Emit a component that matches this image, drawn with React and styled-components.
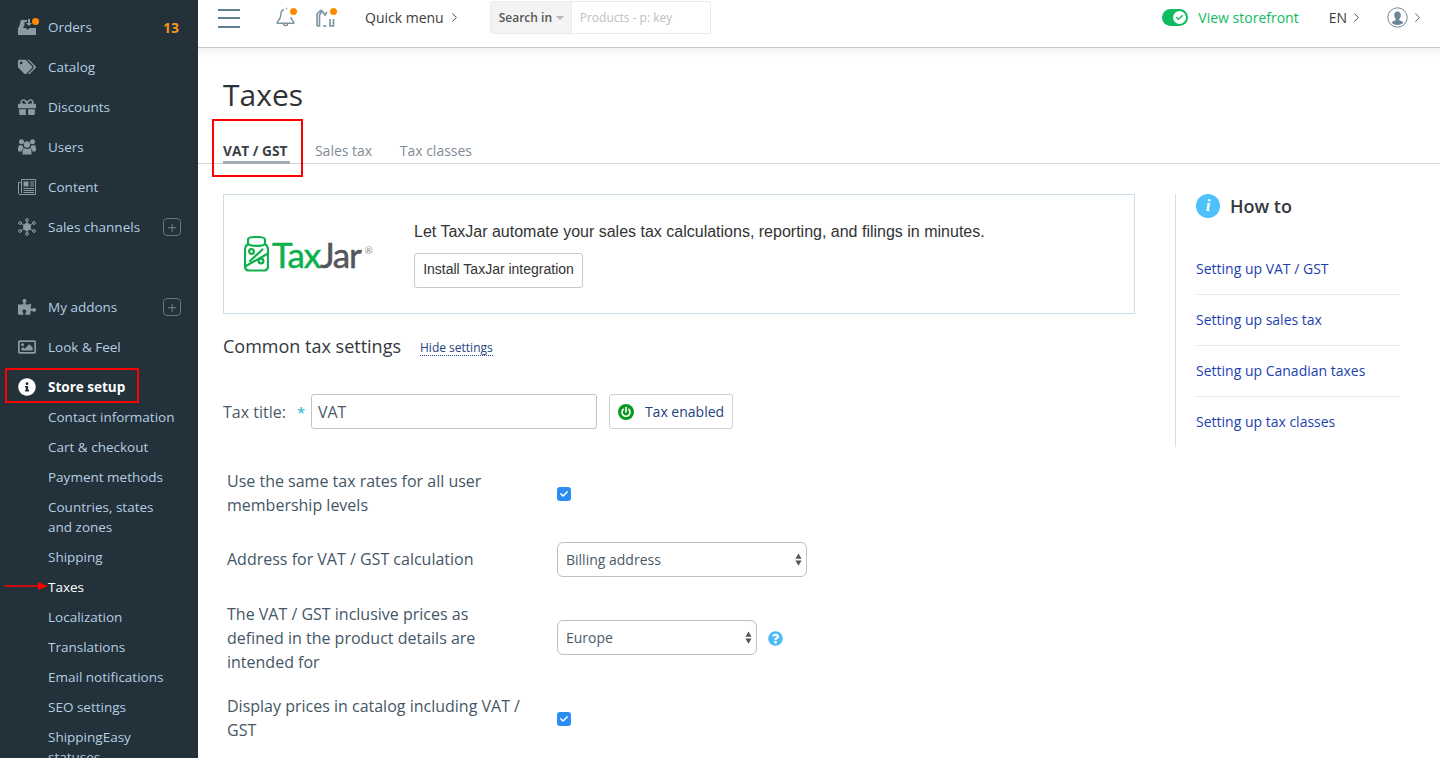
import React from "react";
import styled, { createGlobalStyle } from "styled-components";
import { FaTags, FaGift, FaPuzzlePiece, FaRegImage, FaInfoCircle, FaQuestionCircle, FaCheck } from "react-icons/fa";
import { FiChevronRight } from "react-icons/fi";

const Global = createGlobalStyle`
  html, body { margin: 0; padding: 0; height: 100%; overflow: hidden; background: #fff; }
  body { font-family: "Open Sans", "Liberation Sans", sans-serif; }
  * { box-sizing: border-box; }
`;

const Page = styled.div`position: relative; display: flex; width: 1440px; height: 758px; overflow: hidden;`;

const Sidebar = styled.nav`
  width: 198px; flex: none; height: 758px; overflow: hidden; background: #22313a;
  padding-top: 7px; color: #b7cde0; font-size: 13.5px;
`;
const NavItem = styled.div`
  display: flex; align-items: center; height: 40px; padding: 0 18px;
  color: ${p => (p.$active ? "#fff" : "#b7cde0")}; font-weight: ${p => (p.$active ? 700 : 400)};
`;
const NavSpacer = styled.div`height: 40px;`;
const NavIcon = styled.span`
  position: relative; display: flex; align-items: center; justify-content: center; width: 18px; height: 18px; margin-right: 12px;
  color: ${p => (p.$active ? "#fff" : "#8b9aa3")}; font-size: 18px;
`;
const NavDot = styled.span`position: absolute; top: 0; right: -3px; width: 7px; height: 7px; border-radius: 50%; background: #ff8a00;`;
const NavLabel = styled.span`flex: 1; line-height: 20px;`;
const Count = styled.span`color: #f7931e; font-weight: 700; font-size: 14px; padding-right: 1px;`;
const PlusBox = styled.span`
  display: flex; width: 18px; height: 18px; border: 1px solid #66757f; border-radius: 4px; align-items: center; justify-content: center;
  color: #66757f; font-size: 17px; font-weight: 400; line-height: 1; margin-right: -1px;
`;
const SubList = styled.div`margin-top: -5px;`;
const SubItem = styled.div`
  padding: 5px 18px 5px 48px; line-height: 20px; color: ${p => (p.$active ? "#fff" : "#b7cde0")};
`;

const Main = styled.div`flex: 1; min-width: 0; display: flex; flex-direction: column;`;
const TopBar = styled.header`
  display: flex; align-items: center; height: 48px; padding: 0 15px 13px 20px; border-bottom: 1px solid #c8c8c8; color: #333;
  font-size: 14px; flex: none;
`;
const Burger = styled.div`
  width: 22px; height: 19px; margin-top: 2px; display: flex; flex-direction: column; justify-content: space-between;
  & > i { display: block; height: 2px; background: #5f7f8e; }
`;
const BellWrap = styled.span`position: relative; display: flex; margin-left: ${p => p.$left}px; width: 22px; height: 22px;`;
const IconDot = styled.span`position: absolute; top: 2px; right: 0; width: 7px; height: 7px; border-radius: 50%; background: #ff8a00;`;
const QuickMenu = styled.span`display: flex; align-items: center; margin-left: 28px; gap: 3px; color: #3b3b3b;`;
const SearchBox = styled.div`
  display: flex; height: 33px; width: 221px; margin-left: 28px; margin-top: 1px; border: 1px solid #eaeaea; border-radius: 3px; font-size: 12px; overflow: hidden;
`;
const SearchIn = styled.div`
  width: 81px; background: #f3f3f3; border-right: 1px solid #eaeaea; display: flex; align-items: center; padding-left: 8px; font-weight: 600; color: #555; gap: 4px;
  &::after { content: ""; border-left: 4px solid transparent; border-right: 4px solid transparent; border-top: 4px solid #b5b5b5; }
`;
const SearchPlaceholder = styled.div`flex: 1; display: flex; align-items: center; padding-left: 8px; color: #c0c0c0;`;
const TopRight = styled.div`display: flex; align-items: center; margin-left: auto;`;
const Toggle = styled.span`
  display: flex; align-items: center; justify-content: flex-end; width: 26px; height: 17px; border-radius: 9px; background: #0dbb62; padding-right: 1px;
`;
const ToggleKnob = styled.span`
  width: 13px; height: 13px; border-radius: 50%; background: #fff; color: #0dbb62; display: flex; align-items: center; justify-content: center; font-size: 7px; margin-right: 1px;
`;
const Storefront = styled.span`color: #0dbb62; margin-left: 10px;`;
const Lang = styled.span`display: flex; align-items: center; margin-left: 30px; gap: 2px; color: #3b3b3b;`;
const Avatar = styled.span`display: flex; margin-left: 23px; align-items: center; gap: 2px; color: #555;`;

const Body = styled.div`
  flex: 1; min-height: 0; overflow: hidden;
  background: linear-gradient(#f4f4f4, #fff 10px) no-repeat; background-size: 100% 12px;
`;
const Title = styled.h1`margin: 0; padding: 26px 0 0 25px; font-weight: 400; font-size: 30px; line-height: 41px; color: #2f3338;`;
const Tabs = styled.div`
  display: flex; gap: 26px; padding: 19px 0 0 25px; height: 49px; border-bottom: 1px solid #d6d6d6; font-size: 14px;
`;
const Tab = styled.div`
  height: ${p => (p.$active ? "30px" : "29px")}; padding: 8px ${p => (p.$active ? "3px" : "1.5px")} 0 0; line-height: 18px;
  margin-right: ${p => (p.$active ? "-1.5px" : "0")};
  color: ${p => (p.$active ? "#3a4148" : "#7f8c96")};
  font-weight: ${p => (p.$active ? 700 : 400)};
  font-size: ${p => (p.$active ? "13.7px" : "14px")};
  border-bottom: ${p => (p.$active ? "3px solid #a3acb1" : "0")};
`;
const Columns = styled.div`display: flex; padding: 30px 0 0 25px;`;
const Content = styled.div`width: 912px; flex: none;`;
const Promo = styled.div`
  display: flex; align-items: center; height: 120px; border: 1px solid #cfdfe9; padding-left: 20px;
`;
const Logo = styled.div`display: flex; align-items: center; width: 170px; height: 36px;`;
const LogoText = styled.span`
  font-family: "Lato", sans-serif; font-size: 35px; line-height: 36px; letter-spacing: -1.2px; color: #0eb04b; margin-left: 3px; font-weight: 400;
  -webkit-text-stroke: 0.5px currentColor;
  & > b { color: #54565b; font-weight: 400; }
  & > sup { color: #8b8b8b; font-size: 10px; vertical-align: 14px; letter-spacing: 0; line-height: 0; margin-left: 4px; -webkit-text-stroke: 0; }
`;
const PromoText = styled.div`
  font-family: "Liberation Sans", Arial, sans-serif; font-size: 16px; color: #333;
`;
const PromoLine = styled.div`line-height: 22px; margin-bottom: 10px;`;
const PromoButton = styled.button`
  display: block; font: 14px "Liberation Sans", Arial, sans-serif; color: #333; background: #fff; width: 169px; height: 35px; border: 1px solid #c9c9c9; border-radius: 3px; padding: 0 0 2px;
`;
const SettingsHead = styled.div`display: flex; align-items: center; margin-top: 21px; height: 24px;`;
const SettingsTitle = styled.h2`margin: 0; font-size: 18px; font-weight: 400; color: #33383d; line-height: 24px; position: relative; top: -1px;`;
const HideLink = styled.a`margin-left: 19px; font-size: 12px; color: #24427f; border-bottom: 1px dotted #24427f; line-height: 14px; margin-top: 3px;`;
const TaxRow = styled.div`display: flex; align-items: center; margin-top: 35px; height: 35px;`;
const TaxLabel = styled.label`font-size: 16px; color: #4b5a68;`;
const Star = styled.span`color: #21b5d6; font-size: 15px; margin-left: 11px; width: 14px; display: block;`;
const TextField = styled.div`
  width: 286px; height: 35px; margin-left: 0; border: 1px solid #c3c3c3; border-radius: 3px; display: flex; align-items: center; padding-left: 6px;
  font-size: 16px; color: #4b5a68;
`;
const EnabledBtn = styled.div`
  display: flex; align-items: center; margin-left: 12px; width: 124px; height: 35px; border: 1px solid #d0d0d0; border-radius: 3px; padding-left: 8px; gap: 11px;
  color: #24427f; font-size: 14px;
`;
const Form = styled.div`margin-top: 0; padding-left: 4px;`;
const FormRow = styled.div`
  display: flex; align-items: center; margin-top: ${p => p.$gap}px; min-height: ${p => p.$h}px;
`;
const FormLabel = styled.div`width: 330px; flex: none; font-size: 16px; line-height: 24px; color: #455666; padding-right: 30px;`;
const Checkbox = styled.span`
  width: 14px; height: 14px; border-radius: 3px; background: #2b8cf3; color: #fff; display: flex; align-items: center; justify-content: center; font-size: 8px; margin-top: 2px;
`;
const Select = styled.div`
  width: ${p => p.$w}px; height: 35px; border: 1px solid #bfbfbf; border-radius: 6px; display: flex; align-items: center; justify-content: space-between;
  padding: 0 4px 0 8px; font-size: 14px; color: #4b5a68; background: #fff; margin-bottom: ${p => p.$lift || 0}px;
`;
const Help = styled.span`display: flex; margin-left: 11px; color: #4bbcf5; font-size: 15px;`;
const Aside = styled.aside`
  margin-left: 40px; width: 224px; flex: none; height: 253px; border-left: 1px solid #dcdcdc; padding-left: 20px;
`;
const HowTo = styled.div`display: flex; align-items: center; gap: 10px; height: 24px; font-size: 18px; font-weight: 600; color: #33383d;`;
const InfoBadge = styled.span`
  width: 24px; height: 24px; border-radius: 50%; background: #4cc1fb; color: #fff; display: flex; align-items: center; justify-content: center;
  font: italic 700 17px "Liberation Serif", serif;
`;
const LinkList = styled.div`margin-top: 26px;`;
const HelpLink = styled.div`
  height: 51px; padding-top: 15px; line-height: 20px; font-size: 14px; color: #1d3fae; border-bottom: 1px dotted #d0d0d0;
  &:last-child { border-bottom: 0; }
`;
const RedBox = styled.div`
  position: absolute; left: ${p => p.$x}px; top: ${p => p.$y}px; width: ${p => p.$w}px; height: ${p => p.$h}px; border: 2px solid #f00; pointer-events: none;
`;
const RedArrow = styled.svg`position: absolute; left: 3px; top: 580px;`;

const Hub = () => (
  <svg width="18" height="18" viewBox="0 0 18 18" fill="none" stroke="#8b9aa3" strokeWidth="1">
    <circle cx="9" cy="9" r="3.5" fill="#8b9aa3" />
    <path d="M9 2v4M9 12v4M2.5 5l4 2.5M11.5 10.5l4 2.5M2.5 13l4-2.5M11.5 7.5l4-2.5" />
    <circle cx="9" cy="2" r="1.4" /><circle cx="9" cy="16" r="1.4" /><circle cx="2" cy="5" r="1.4" /><circle cx="16" cy="5" r="1.4" /><circle cx="2" cy="13" r="1.4" /><circle cx="16" cy="13" r="1.4" />
  </svg>
);
const Inbox = () => (
  <svg width="18" height="18" viewBox="0 0 18 18" fill="#8b9aa3">
    <path d="M3 2h6v2H6.5v3L5 10h3.2a1.5 1.5 0 0 0 3 0H18v7H0v-7l1-1z" />
    <path d="M10 1h2v4h2l-3 3-3-3h2z" />
  </svg>
);
const UsersIcon = () => (
  <svg width="18" height="18" viewBox="0 0 18 18" fill="#8b9aa3">
    <circle cx="9" cy="6.500" r="3.200" />
    <path d="M4.500 16.500v-3c0-2.200 1.600-3.300 2.400-3.300.5.500 1.300.8 2.100.8s1.600-.3 2.100-.8c.8 0 2.400 1.100 2.400 3.300v3z" />
    <circle cx="3.500" cy="3.700" r="2.500" /><circle cx="14.500" cy="3.700" r="2.500" />
    <path d="M0 11.500C0 8.500.8 7 2 7c.6.400 1.200.5 2 .5.300 0 .7 0 1-.1-.2 1.200.2 2.300 1 3C4.500 11 3.500 12.200 3.500 13.500H1c-.6 0-1-.5-1-2zM18 11.500C18 8.500 17.200 7 16 7c-.6.400-1.200.5-2 .5-.3 0-.7 0-1-.1.200 1.200-.2 2.300-1 3 1.500.6 2.500 1.800 2.500 3.100H17c.6 0 1-.5 1-2z" />
  </svg>
);
const NewsIcon = () => (
  <svg width="18" height="18" viewBox="0 0 18 18" fill="none" stroke="#8b9aa3" strokeWidth="1">
    <path d="M3.500 1.500h14v15H2c-.8 0-1.500-.7-1.500-1.500V4.500h3zM3.500 4.500V15" />
    <rect x="5.500" y="3.500" width="5" height="5" fill="#8b9aa3" stroke="none" />
    <path d="M12 4h4M12 6h4M12 8h4M5.500 10.500h10.500M5.500 12.500h10.500M5.500 14.500h10.500" />
  </svg>
);
const Bell = () => (
  <svg width="22" height="22" viewBox="0 0 22 22" fill="none" stroke="#7a93a0" strokeWidth="1.400">
    <path d="M9 3.500C6.800 4 5.800 6 5.800 9c0 3-1.500 5-3.500 7v1.300h16.500V16c-1.500-1.500-2.500-3-3-5M11 2.500h1.200M8.500 18c.4 2.200 3.800 2.200 4.200 0" />
  </svg>
);
const Store = () => (
  <svg width="22" height="22" viewBox="0 0 22 22" fill="none" stroke="#7a93a0" strokeWidth="1.600">
    <path d="M2 20V8l4-4M2 20h2.500V9M4.500 9L7 5l3 4 2-3M8 20h3.500M15 13v7h3.500v-7" />
  </svg>
);
const User = () => (
  <svg width="21" height="21" viewBox="0 0 21 21">
    <circle cx="10.5" cy="10.5" r="9.7" fill="#fff" stroke="#6b8796" strokeWidth="1" />
    <path d="M10.5 4.5c2.2 0 3.3 1.600 3.300 3.700 0 1.500-.7 3-1.600 3.700v1.300c1.800.7 3.500 1.300 4.300 2.600a9 9 0 0 1-12 0c.8-1.300 2.500-1.900 4.300-2.600v-1.300c-.9-.7-1.600-2.200-1.600-3.700 0-2.100 1.100-3.700 3.300-3.700z" fill="#6b8796" />
  </svg>
);
const Power = () => (
  <svg width="16" height="16" viewBox="0 0 16 16">
    <circle cx="8" cy="8" r="8" fill="#0a9a22" />
    <path d="M5.2 5.4a4 4 0 1 0 5.600 0M8 3.500V8" fill="none" stroke="#fff" strokeWidth="1.600" strokeLinecap="round" />
  </svg>
);
const Jar = () => (
  <svg width="25" height="36" viewBox="0 0 25 36" fill="none" stroke="#0eb04b" strokeWidth="2.200" strokeLinecap="round">
    <path d="M4 3.500C4 1.800 8 1 12.500 1S21 1.800 21 3.500v4c0 1.500-4 2.300-8.500 2.300S4 9 4 7.500z" />
    <path d="M4 8C2 9.500 1 11 1 13v17c0 2.500 1.500 4.500 4 4.500h15c2.500 0 4-2 4-4.500V13c0-2-1-3.500-3-5" />
    <path d="M1 30.500l23-13M6 25L18.500 13.500" />
    <circle cx="7.500" cy="15.500" r="2.400" />
    <circle cx="17" cy="25" r="2.400" />
  </svg>
);
const UpDown = () => (
  <svg width="7" height="13" viewBox="0 0 8 14" fill="#555"><path d="M4 0l3.500 6H.5zM4 14L.5 8h7z" /></svg>
);
const Chevron = styled(FiChevronRight)`font-size: 15px; stroke-width: 1.5;`;

const subItems = ["Contact information", "Cart & checkout", "Payment methods", "Countries, states and zones", "Shipping", "Taxes", "Localization", "Translations", "Email notifications", "SEO settings", "ShippingEasy statuses"];
const links = ["Setting up VAT / GST", "Setting up sales tax", "Setting up Canadian taxes", "Setting up tax classes"];

export default function App() {
  return (
    <Page>
      <Global />
      <Sidebar>
        <NavItem><NavIcon><Inbox /><NavDot /></NavIcon><NavLabel>Orders</NavLabel><Count>13</Count></NavItem>
        <NavItem><NavIcon><FaTags /></NavIcon><NavLabel>Catalog</NavLabel></NavItem>
        <NavItem><NavIcon><FaGift /></NavIcon><NavLabel>Discounts</NavLabel></NavItem>
        <NavItem><NavIcon><UsersIcon /></NavIcon><NavLabel>Users</NavLabel></NavItem>
        <NavItem><NavIcon><NewsIcon /></NavIcon><NavLabel>Content</NavLabel></NavItem>
        <NavItem><NavIcon><Hub /></NavIcon><NavLabel>Sales channels</NavLabel><PlusBox>+</PlusBox></NavItem>
        <NavSpacer />
        <NavItem><NavIcon><FaPuzzlePiece /></NavIcon><NavLabel>My addons</NavLabel><PlusBox>+</PlusBox></NavItem>
        <NavItem><NavIcon><FaRegImage /></NavIcon><NavLabel>Look &amp; Feel</NavLabel></NavItem>
        <NavItem $active><NavIcon $active><FaInfoCircle /></NavIcon><NavLabel>Store setup</NavLabel></NavItem>
        <SubList>
          {subItems.map(s => <SubItem key={s} $active={s === "Taxes"}>{s}</SubItem>)}
        </SubList>
      </Sidebar>
      <Main>
        <TopBar>
          <Burger><i /><i /><i /></Burger>
          <BellWrap $left={35}><Bell /><IconDot /></BellWrap>
          <BellWrap $left={18}><Store /><IconDot /></BellWrap>
          <QuickMenu>Quick menu <Chevron /></QuickMenu>
          <SearchBox>
            <SearchIn>Search in</SearchIn>
            <SearchPlaceholder>Products - p: key</SearchPlaceholder>
          </SearchBox>
          <TopRight>
            <Toggle><ToggleKnob><FaCheck /></ToggleKnob></Toggle>
            <Storefront>View storefront</Storefront>
            <Lang>EN <Chevron /></Lang>
            <Avatar><User /><Chevron /></Avatar>
          </TopRight>
        </TopBar>
        <Body>
          <Title>Taxes</Title>
          <Tabs>
            <Tab $active>VAT / GST</Tab>
            <Tab>Sales tax</Tab>
            <Tab>Tax classes</Tab>
          </Tabs>
          <Columns>
            <Content>
              <Promo>
                <Logo><Jar /><LogoText>Tax<b>Jar</b><sup>®</sup></LogoText></Logo>
                <PromoText>
                  <PromoLine>Let TaxJar automate your sales tax calculations, reporting, and filings in minutes.</PromoLine>
                  <PromoButton>Install TaxJar integration</PromoButton>
                </PromoText>
              </Promo>
              <SettingsHead>
                <SettingsTitle>Common tax settings</SettingsTitle>
                <HideLink>Hide settings</HideLink>
              </SettingsHead>
              <TaxRow>
                <TaxLabel>Tax title:</TaxLabel>
                <Star>*</Star>
                <TextField>VAT</TextField>
                <EnabledBtn><Power />Tax enabled</EnabledBtn>
              </TaxRow>
              <Form>
                <FormRow $gap={40} $h={48}>
                  <FormLabel>Use the same tax rates for all user membership levels</FormLabel>
                  <Checkbox><FaCheck /></Checkbox>
                </FormRow>
                <FormRow $gap={18} $h={48}>
                  <FormLabel>Address for VAT / GST calculation</FormLabel>
                  <Select $w={250}>Billing address<UpDown /></Select>
                </FormRow>
                <FormRow $gap={19} $h={72}>
                  <FormLabel>The VAT / GST inclusive prices as defined in the product details are intended for</FormLabel>
                  <Select $w={200} $lift={2}>Europe<UpDown /></Select>
                  <Help><FaQuestionCircle /></Help>
                </FormRow>
                <FormRow $gap={20} $h={48}>
                  <FormLabel>Display prices in catalog including VAT / GST</FormLabel>
                  <Checkbox><FaCheck /></Checkbox>
                </FormRow>
              </Form>
            </Content>
            <Aside>
              <HowTo><InfoBadge>i</InfoBadge>How to</HowTo>
              <LinkList>{links.map(l => <HelpLink key={l}>{l}</HelpLink>)}</LinkList>
            </Aside>
          </Columns>
        </Body>
      </Main>
      <RedBox $x={5} $y={368} $w={134} $h={35} />
      <RedBox $x={212} $y={119} $w={91} $h={58} />
      <RedArrow width="46" height="12" viewBox="0 0 46 12">
        <path d="M1 6h34" stroke="#f00" strokeWidth="1.500" />
        <path d="M35 2l10 4-10 4z" fill="#f00" />
      </RedArrow>
    </Page>
  );
}
